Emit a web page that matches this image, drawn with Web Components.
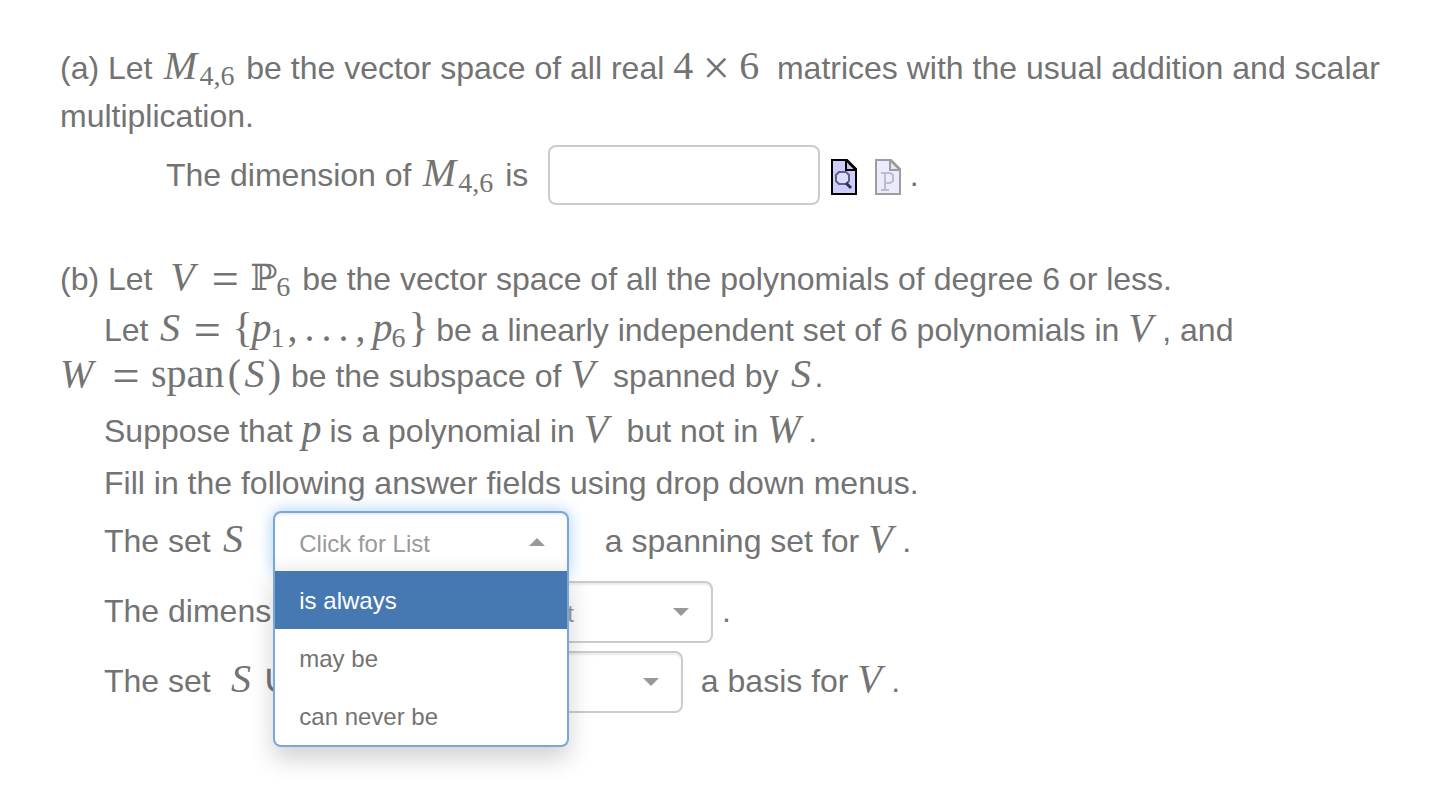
<!DOCTYPE html>
<html lang="en">
<head>
<meta charset="utf-8">
<title>Vector space dimension problem</title>
<style>
  body { margin: 0; background: #fff; }
</style>
</head>
<body>
<problem-page>
  <problem-line>(a) Let <math-expr><math-sym k="M">M</math-sym><math-sub>4,6</math-sub></math-expr> be the vector space of all real <math-expr><math-sym k="num">4</math-sym><math-sym k="bin">×</math-sym><math-sym k="num">6</math-sym></math-expr>&nbsp; matrices with the usual addition and scalar multiplication.</problem-line>
  <problem-line class="dim" indent="deep">The dimension of <math-expr><math-sym k="M">M</math-sym><math-sub>4,6</math-sub></math-expr> is&nbsp; <answer-box label="The dimension of M 4,6"></answer-box> <icon-button kind="preview" label="Preview"></icon-button>&nbsp; <icon-button kind="plot" label="Plot" disabled></icon-button> .</problem-line>

  <problem-line class="part">(b) Let&nbsp; <math-expr><math-sym k="V">V</math-sym><math-sym k="rel">=</math-sym><math-sym k="bb">ℙ</math-sym><math-sub>6</math-sub></math-expr> be the vector space of all the polynomials of degree 6 or less.</problem-line>
  <problem-line class="next" indent="first" tight>Let <math-expr><math-sym k="S">S</math-sym><math-sym k="rel">=</math-sym><math-sym k="brace">{</math-sym><math-sym k="p">p</math-sym><math-sub>1</math-sub><math-sym k="dot">,</math-sym><math-sym k="dot">.</math-sym><math-sym k="dot">.</math-sym><math-sym k="dot">.</math-sym><math-sym k="dot">,</math-sym><math-sym k="p">p</math-sym><math-sub>6</math-sub><math-sym k="brace">}</math-sym></math-expr> be a linearly independent set of 6 polynomials in <math-expr><math-sym k="V">V</math-sym></math-expr>, and <math-expr><math-sym k="W">W</math-sym><math-sym k="rel">=</math-sym><math-sym k="fn">span</math-sym><math-sym k="paren">(</math-sym><math-sym k="S">S</math-sym><math-sym k="paren">)</math-sym></math-expr> be the subspace of <math-expr><math-sym k="V">V</math-sym></math-expr>&nbsp;spanned by <math-expr><math-sym k="S">S</math-sym></math-expr>.</problem-line>
  <problem-line class="wide" indent="first">Suppose that <math-expr><math-sym k="p">p</math-sym></math-expr> is a polynomial in <math-expr><math-sym k="V">V</math-sym></math-expr> but not in <math-expr><math-sym k="W">W</math-sym></math-expr>.</problem-line>
  <problem-line class="next" indent="first">Fill in the following answer fields using drop down menus.</problem-line>
  <problem-line class="next" indent="first">The set <math-expr><math-sym k="S">S</math-sym></math-expr>&nbsp;&nbsp; <choice-list label="The set S" choices="is always|may be|can never be" open></choice-list>&nbsp;&nbsp;&nbsp; a spanning set for <math-expr><math-sym k="V">V</math-sym></math-expr>.</problem-line>
  <problem-line class="wide" indent="first">The dimension of <math-expr><math-sym k="W">W</math-sym></math-expr>&nbsp; <choice-list label="The dimension of W" choices="is always 6|may be 6|can never be 6"></choice-list> .</problem-line>
  <problem-line class="wide" indent="first">The set&nbsp; <math-expr><math-sym k="S">S</math-sym><math-sym k="cup">∪</math-sym><math-sym k="brace">{</math-sym><math-sym k="p">p</math-sym><math-sym k="brace">}</math-sym></math-expr>&nbsp;&nbsp;&nbsp; <choice-list label="The set S with p" choices="is always|may be|can never be"></choice-list>&nbsp; a basis for <math-expr><math-sym k="V">V</math-sym></math-expr>.</problem-line>
</problem-page>

<script>
class BaseElement extends HTMLElement {
  constructor() { super(); this.attachShadow({ mode: "open" }); }
  connectedCallback() { this.shadowRoot.innerHTML = this.render(); }
}

customElements.define("problem-page", class extends BaseElement {
  render() {
    return `<style>
      :host { display: flex; flex-direction: column; padding: 44px 48px 88px 60px;
        font: 32px/48px "Liberation Sans", Arial, sans-serif; color: #737373; }
      ::slotted(.dim) { margin-top: 5px; }
      ::slotted(.part) { margin-top: 44px; }
      ::slotted(.next) { margin-top: 4px; }
      ::slotted(.wide) { margin-top: 8px; }
    </style><slot></slot>`;
  }
});

customElements.define("problem-line", class extends BaseElement {
  render() {
    return `<style>
      :host { display: block; }
      :host([indent="first"]) { text-indent: 44px; }
      :host([indent="deep"]) { text-indent: 106px; }
      :host([tight]) { line-height: 46px; }
    </style><slot></slot>`;
  }
});

customElements.define("math-expr", class extends BaseElement {
  render() {
    return `<style>
      :host { display: inline-block; white-space: nowrap; text-indent: 0; line-height: 40px;
        font-family: "Liberation Serif", "Times New Roman", serif; font-size: 40px; }
    </style><slot></slot>`;
  }
});

customElements.define("math-sym", class extends BaseElement {
  render() {
    return `<style>
      :host { display: inline-block; line-height: 40px; }
      :host([k="M"]) { width: 38px; font-style: italic; text-align: center; }
      :host([k="V"]) { width: 30px; font-style: italic; }
      :host([k="W"]) { width: 41px; font-style: italic; }
      :host([k="S"]) { width: 25px; font-style: italic; text-align: center; }
      :host([k="V"]:last-child) { width: 34px; }
      :host([k="S"]:last-child) { width: 27px; }
      :host([k="p"]) { width: 19px; font-style: italic; }
      :host([k="num"]) { width: 20px; }
      :host([k="fn"]) { width: 76px; }
      :host([k="paren"]) { width: 15px; text-align: center; }
      :host([k="brace"]) { width: 19px; font-size: 42px; text-align: center; }
      :host([k="dot"]) { width: 17px; }
      :host([k="bb"]) { width: 26px; font-size: 36px; font-family: "DejaVu Serif", "DejaVu Sans", serif; }
      :host([k="rel"]) { width: 30px; margin: 0 10px; font-size: 48px; line-height: 30px; vertical-align: -5px; text-align: center; }
      :host([k="bin"]) { width: 30px; margin: 0 8px; font-size: 48px; line-height: 30px; vertical-align: -5px; text-align: center; }
      :host([k="cup"]) { width: 27px; margin: 0 6px 0 8px; }
    </style><slot></slot>`;
  }
});

customElements.define("math-sub", class extends BaseElement {
  render() {
    return `<style>
      :host { display: inline-block; font-size: 28px; line-height: 28px; vertical-align: -6px; margin-right: 3px; }
    </style><slot></slot>`;
  }
});

customElements.define("answer-box", class extends BaseElement {
  render() {
    return `<style>
      :host { display: inline-block; vertical-align: middle; text-indent: 0; margin: 0 2px 6px; }
      input { display: block; box-sizing: border-box; width: 272px; height: 60px; padding: 0 24px;
        border: 2px solid #ccc; border-radius: 8px; background: #fff; color: inherit;
        font: 24px "Liberation Sans", Arial, sans-serif; outline: 0; }
    </style><input type="text" aria-label="${this.getAttribute("label")}">`;
  }
});

customElements.define("icon-button", class extends BaseElement {
  render() {
    const glyph = this.getAttribute("kind") === "preview"
      ? `<path d="M8 13h7l3 3v6l-3 3H8l-3-3v-6z" fill="#dcdcff" stroke="#606080" stroke-width="2"/>
         <path d="M15 24l5 5" stroke="#333350" stroke-width="3" fill="none"/>`
      : `<path d="M6 14h9l3 2v6l-3 2h-5M10 14v17M6 31h8" stroke="#55556a" stroke-width="2" fill="none"/>`;
    return `<style>
      :host { display: inline-block; vertical-align: middle; text-indent: 0; margin-bottom: 2px; }
      button { display: block; padding: 0; border: 0; background: none; cursor: pointer; }
      button:disabled { opacity: .38; cursor: default; }
      svg { display: block; }
    </style><button type="button" aria-label="${this.getAttribute("label")}" ${this.hasAttribute("disabled") ? "disabled" : ""}>
      <svg width="26" height="36" viewBox="0 0 26 36">
        <path d="M1 1h15l9 9v25H1z" fill="#ccccff" stroke="#000" stroke-width="2"/>
        <path d="M15 1v10h10z" fill="#c4c4d8" stroke="#000" stroke-width="2"/>
        ${glyph}
      </svg></button>`;
  }
});

customElements.define("choice-list", class extends BaseElement {
  render() {
    const choices = this.getAttribute("choices").split("|");
    const menu = this.hasAttribute("open")
      ? `<ul role="listbox">${choices.map((c, i) => `<li role="option" aria-selected="${i === 0}">${c}</li>`).join("")}</ul>`
      : "";
    return `<style>
      :host { display: inline-block; position: relative; box-sizing: border-box; width: 296px;
        text-indent: 0; font-size: 24px; line-height: 58px; }
      select { appearance: none; display: block; box-sizing: border-box; width: 100%; height: 62px; margin: 0;
        padding: 2px 48px 0 24px; border: 2px solid #ccc; border-radius: 8px; background: #fff;
        box-shadow: inset 0 2px 2px rgba(0,0,0,.08); color: #999; font: inherit; outline: 0; }
      svg { position: absolute; right: 24px; top: 27px; pointer-events: none; }
      :host([open]) { z-index: 2; }
      :host([open]) select { border-color: #7aa7d9; border-bottom-color: transparent; border-radius: 8px 8px 0 0;
        background: linear-gradient(#fff 70%, #f7f7f7);
        box-shadow: inset 0 2px 2px rgba(0,0,0,.08), 0 0 16px rgba(102,175,233,.6); }
      :host([open]) svg { transform: rotate(180deg); }
      ul { position: absolute; top: 60px; left: 0; right: 0; margin: 0; padding: 0; list-style: none;
        border: 2px solid #7aa7d9; border-top: 0; border-radius: 0 0 8px 8px; background: #fff;
        box-shadow: 0 12px 24px rgba(0,0,0,.18); overflow: hidden; }
      li { padding: 0 24px; height: 58px; line-height: 60px; color: #737373; }
      li[aria-selected="true"] { background: #4678b2; color: #fff; }
    </style>
    <select aria-label="${this.getAttribute("label")}">
      <option>Click for List</option>${choices.map(c => `<option>${c}</option>`).join("")}
    </select>
    <svg width="16" height="8" viewBox="0 0 16 8" aria-hidden="true"><path d="M0 0h16L8 8z" fill="#999"/></svg>
    ${menu}`;
  }
});
</script>
</body>
</html>
